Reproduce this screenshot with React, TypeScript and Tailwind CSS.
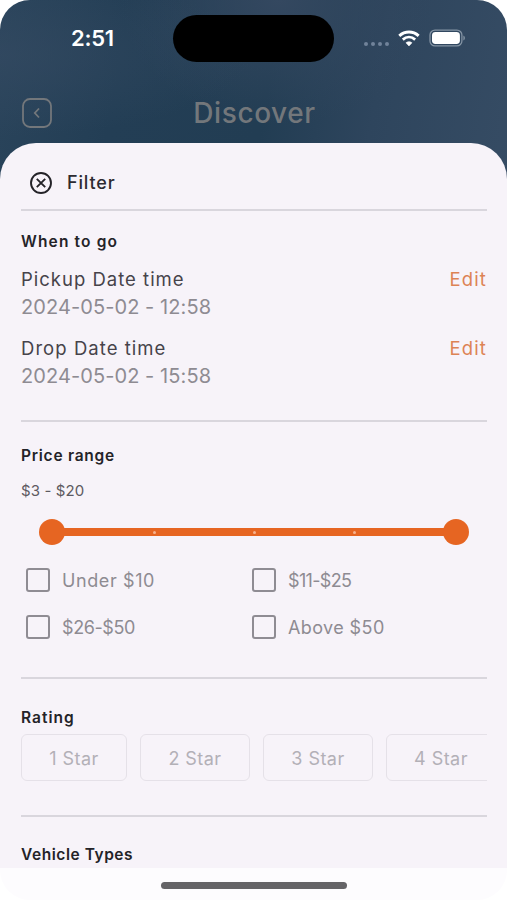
import { useState } from "react";

const dates = [
  { label: "Pickup Date time", value: "2024-05-02 - 12:58", tracking: "tracking-[1px]" },
  { label: "Drop Date time", value: "2024-05-02 - 15:58", tracking: "tracking-[1.05px]" },
];

const prices = [
  { label: "Under $10", tracking: "tracking-[0.6px]" },
  { label: "$11-$25", tracking: "tracking-[-0.65px]" },
  { label: "$26-$50", tracking: "tracking-[-0.4px]" },
  { label: "Above $50", tracking: "tracking-[0.4px]" },
];

const ratings = [
  { label: "1 Star", width: "w-[106px]" },
  { label: "2 Star", width: "w-[110px]" },
  { label: "3 Star", width: "w-[110px]" },
  { label: "4 Star", width: "w-[110px]" },
];

function StatusBar() {
  return (
    <div className="flex h-[76px] items-center pl-[71px] pr-[41px]">
      <div className="w-[102px] text-[22px] font-semibold leading-none tracking-[-0.25px] text-white">
        2:51
      </div>
      <div className="h-[47px] w-[162px] rounded-full bg-black" />
      <div className="ml-[30px] mt-[11px] flex gap-[3px]">
        {[0, 1, 2, 3].map((dot) => (
          <span key={dot} className="size-1 rounded-full bg-[#71839a]" />
        ))}
      </div>
      <svg className="ml-[9px]" width="22" height="17" viewBox="0 0 22 17" fill="none">
        <path d="M1.300 5.800C7 .7 15 .7 20.700 5.800" stroke="#fff" strokeWidth="3" />
        <path d="M4.800 9.600C8.500 6.300 13.500 6.300 17.200 9.600" stroke="#fff" strokeWidth="2.800" />
        <path d="M8 12.800C9.700 11.300 12.300 11.300 14 12.800L11 16Z" fill="#fff" stroke="#fff" strokeWidth="0.600" strokeLinejoin="round" />
      </svg>
      <svg className="ml-[9px]" width="37" height="18" viewBox="0 0 37 18" fill="none">
        <rect x="1" y="1" width="32" height="16" rx="5" stroke="#8494a4" strokeWidth="1.300" />
        <rect x="3" y="3" width="28" height="12" rx="3.500" fill="#fff" />
        <path d="M34.500 6.500c2 .8 2 4.200 0 5z" fill="#8494a4" />
      </svg>
    </div>
  );
}

function Divider() {
  return <div className="h-0.5 shrink-0 bg-[#d9d6dd]" />;
}

export default function App() {
  const [checked, setChecked] = useState<string[]>([]);

  const togglePrice = (label: string) => {
    setChecked(
      checked.includes(label)
        ? checked.filter((item) => item !== label)
        : [...checked, label]
    );
  };

  return (
    <div className="bg-white">
      <main className="flex h-[900px] w-[507px] flex-col overflow-hidden rounded-[30px] bg-[radial-gradient(ellipse_at_0%_25%,#364b6399_0%,transparent_35%),radial-gradient(ellipse_at_55%_0%,#344860_0%,transparent_40%),linear-gradient(100deg,#2a445b_0%,#233e55_24%,#223d53_52%,#2e455d_72%,#364c64_100%)] bg-[length:100%_220px] bg-no-repeat font-['Inter',sans-serif]">
        <div className="h-[143px] shrink-0">
          <StatusBar />
          <header className="flex h-[73px] items-center px-[22px]">
            <button aria-label="Back">
              <svg width="30" height="30" viewBox="0 0 30 30" fill="none" stroke="#73777b">
                <rect x="1" y="1" width="28" height="28" rx="7" strokeWidth="1.800" />
                <path d="m17 10.500-4.200 4.500 4.200 4.500" strokeWidth="1.800" />
              </svg>
            </button>
            <h1 className="flex-1 pr-[28px] text-center text-[28px] font-medium leading-none tracking-[0.6px] text-[#73777b]">
              Discover
            </h1>
          </header>
        </div>

        <section className="flex h-[725px] shrink-0 flex-col overflow-hidden rounded-t-[36px] bg-[#f7f3f9] pl-[21px] pr-5">
          <div className="flex h-[66px] shrink-0 items-center pl-2 pt-[14px]">
            <button aria-label="Close">
              <svg width="24" height="24" viewBox="0 0 24 24" fill="none" stroke="#242328" strokeWidth="1.900">
                <circle cx="12" cy="12" r="10" />
                <path d="m7.800 7.800 8.400 8.400m0-8.400-8.400 8.400" />
              </svg>
            </button>
            <h2 className="ml-[14px] text-[18px] font-medium leading-none tracking-[0.85px] text-[#2d2b31]">
              Filter
            </h2>
          </div>
          <Divider />

          <h3 className="mt-[21px] text-[15.500px] font-semibold leading-5 tracking-[1.15px] text-[#242328]">
            When to go
          </h3>
          {dates.map((date) => (
            <div key={date.label} className="mt-[13px]">
              <div className="flex h-7 items-center justify-between text-[18.500px] leading-7">
                <span className={`text-[#46434a] ${date.tracking}`}>{date.label}</span>
                <button className="tracking-[1.1px] text-[#dd8355]">Edit</button>
              </div>
              <p className="text-[20px] leading-7 tracking-[0.08px] text-[#8e8b92]">
                {date.value}
              </p>
            </div>
          ))}

          <div className="h-[30px] shrink-0" />
          <Divider />

          <h3 className="mt-6 text-[15.500px] font-semibold leading-5 tracking-[0.75px] text-[#242328]">
            Price range
          </h3>
          <p className="mt-[15px] text-[15px] leading-5 tracking-[0.1px] text-[#5d5a61]">
            $3 - $20
          </p>
          <div className="mx-[18px] mt-[18px] flex h-[26px] shrink-0 items-center">
            <div className="size-[26px] rounded-full bg-[#e66522]" />
            <div className="-mx-1 flex h-2 flex-1 items-center justify-between bg-[#e66522] pl-[92px] pr-[91px]">
              <span className="size-[3px] rounded-full bg-[#f6b28e]" />
              <span className="size-[3px] rounded-full bg-[#f6b28e]" />
              <span className="size-[3px] rounded-full bg-[#f6b28e]" />
            </div>
            <div className="size-[26px] rounded-full bg-[#e66522]" />
          </div>

          <div className="ml-[5px] mt-[23px] grid grid-cols-[226px_1fr] gap-y-[23px]">
            {prices.map((price) => (
              <label key={price.label} className="flex h-6 items-center">
                <input
                  type="checkbox"
                  checked={checked.includes(price.label)}
                  onChange={() => togglePrice(price.label)}
                  className="size-6 appearance-none rounded-[3px] border-2 border-[#8f8c93] checked:bg-[#e66522]"
                />
                <span className={`ml-3 pt-px text-[18px] leading-6 text-[#8e8b92] ${price.tracking}`}>
                  {price.label}
                </span>
              </label>
            ))}
          </div>

          <div className="h-[38px] shrink-0" />
          <Divider />

          <h3 className="mt-[29px] text-[15.500px] font-semibold leading-5 tracking-[1px] text-[#242328]">
            Rating
          </h3>
          <div className="mt-[6px] flex shrink-0 gap-[13px] overflow-hidden">
            {ratings.map((rating) => (
              <button
                key={rating.label}
                className={`h-[47px] shrink-0 rounded-md border-[1.500px] border-[#e5e1e8] pt-0.5 text-[18px] tracking-[0.45px] text-[#b3b0b7] ${rating.width}`}
              >
                {rating.label}
              </button>
            ))}
          </div>

          <div className="h-[34px] shrink-0" />
          <Divider />

          <h3 className="mt-7 text-[15.500px] font-semibold leading-5 tracking-[0.55px] text-[#242328]">
            Vehicle Types
          </h3>
        </section>

        <footer className="flex h-8 shrink-0 items-center justify-center bg-[#fdfcfe] pt-[3px]">
          <div className="h-[7px] w-[186px] rounded-full bg-[#656467]" />
        </footer>
      </main>
    </div>
  );
}
